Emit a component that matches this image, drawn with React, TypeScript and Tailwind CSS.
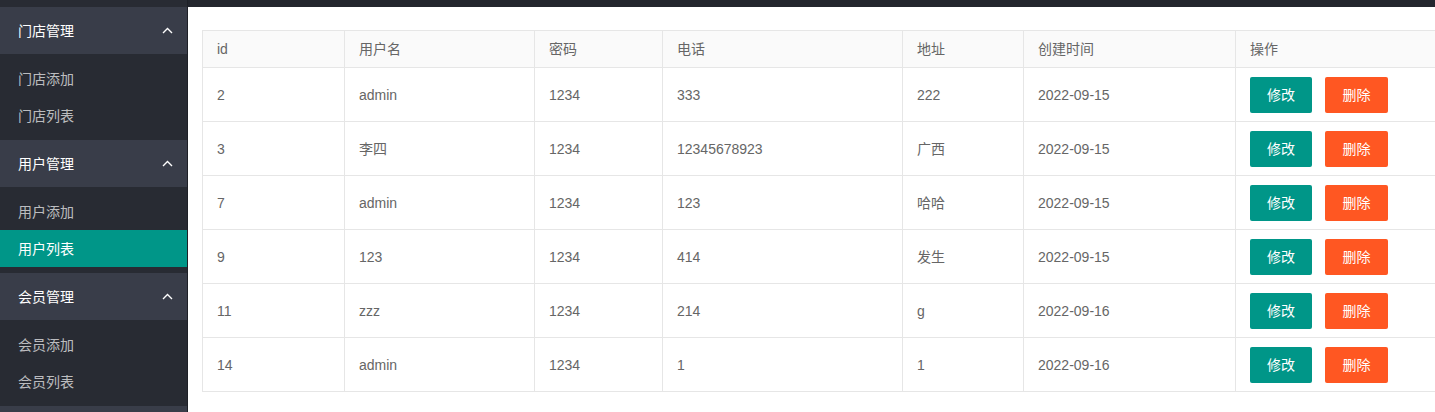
import React from "react";

const font = { fontFamily: '"Liberation Sans", "Noto Sans CJK SC", sans-serif' };

const groups = [
  { name: "门店管理", items: ["门店添加", "门店列表"] },
  { name: "用户管理", items: ["用户添加", "用户列表"] },
  { name: "会员管理", items: ["会员添加", "会员列表"] },
];

const rows = [
  { id: 2, name: "admin", pwd: "1234", phone: "333", addr: "222", date: "2022-09-15" },
  { id: 3, name: "李四", pwd: "1234", phone: "12345678923", addr: "广西", date: "2022-09-15" },
  { id: 7, name: "admin", pwd: "1234", phone: "123", addr: "哈哈", date: "2022-09-15" },
  { id: 9, name: "123", pwd: "1234", phone: "414", addr: "发生", date: "2022-09-15" },
  { id: 11, name: "zzz", pwd: "1234", phone: "214", addr: "g", date: "2022-09-16" },
  { id: 14, name: "admin", pwd: "1234", phone: "1", addr: "1", date: "2022-09-16" },
];

const headers = ["id", "用户名", "密码", "电话", "地址", "创建时间", "操作"];
const widths = [142, 190, 128, 240, 121, 212, 260];

const Chevron = () => (
  <svg width="11" height="7" viewBox="0 0 11 7" fill="none">
    <polyline points="1,6 5.5,1.5 10,6" stroke="white" strokeWidth="1.4" />
  </svg>
);

const SideNav = () => (
  <div className="w-[188px] shrink-0 bg-[#282b33] border-r border-[#1e2027] pt-[7px]">
    {groups.map((g) => (
      <div key={g.name}>
        <div className="h-[47px] bg-[#393d49] flex items-center justify-between pl-[18px] pr-[14px] text-white text-sm">
          <span>{g.name}</span>
          <Chevron />
        </div>
        <div className="py-[6px]">
          {g.items.map((it) => (
            <div
              key={it}
              className={
                it === "用户列表"
                  ? "h-[37px] flex items-center pl-[18px] text-sm bg-[#009688] text-white"
                  : "h-[37px] flex items-center pl-[18px] text-sm text-white/70"
              }
            >
              {it}
            </div>
          ))}
        </div>
      </div>
    ))}
    <div className="h-[47px] bg-[#393d49]" />
  </div>
);

const App = () => {
  return (
    <div className="flex h-[412px] w-[1435px] overflow-hidden bg-white" style={font}>
      <SideNav />
      <div className="flex-1 min-w-0 overflow-hidden">
        <div className="h-[7px] bg-[#23262e]" />
        <div className="pt-[23px] pl-[14px]">
          <table className="table-fixed border-collapse text-sm text-[#666] w-[1293px]">
            <colgroup>
              {widths.map((w, i) => (
                <col key={"col-" + i} style={{ width: w }} />
              ))}
            </colgroup>
            <thead>
              <tr className="bg-[#fafafa]">
                {headers.map((h) => (
                  <th
                    key={h}
                    className="h-[37px] border border-[#e6e6e6] px-[14px] text-left font-normal"
                  >
                    {h}
                  </th>
                ))}
              </tr>
            </thead>
            <tbody>
              {rows.map((r) => (
                <tr key={r.id}>
                  <td className="h-[54px] border border-[#e6e6e6] px-[14px]">{r.id}</td>
                  <td className="border border-[#e6e6e6] px-[14px]">{r.name}</td>
                  <td className="border border-[#e6e6e6] px-[14px]">{r.pwd}</td>
                  <td className="border border-[#e6e6e6] px-[14px]">{r.phone}</td>
                  <td className="border border-[#e6e6e6] px-[14px]">{r.addr}</td>
                  <td className="border border-[#e6e6e6] px-[14px]">{r.date}</td>
                  <td className="border border-[#e6e6e6] px-[14px]">
                    <div className="flex gap-[13px]">
                      <button className="h-[36px] w-[62px] rounded-[2px] bg-[#009688] text-white text-sm">
                        修改
                      </button>
                      <button className="h-[36px] w-[63px] rounded-[2px] bg-[#ff5722] text-white text-sm">
                        删除
                      </button>
                    </div>
                  </td>
                </tr>
              ))}
            </tbody>
          </table>
        </div>
      </div>
    </div>
  );
};

export default App;
